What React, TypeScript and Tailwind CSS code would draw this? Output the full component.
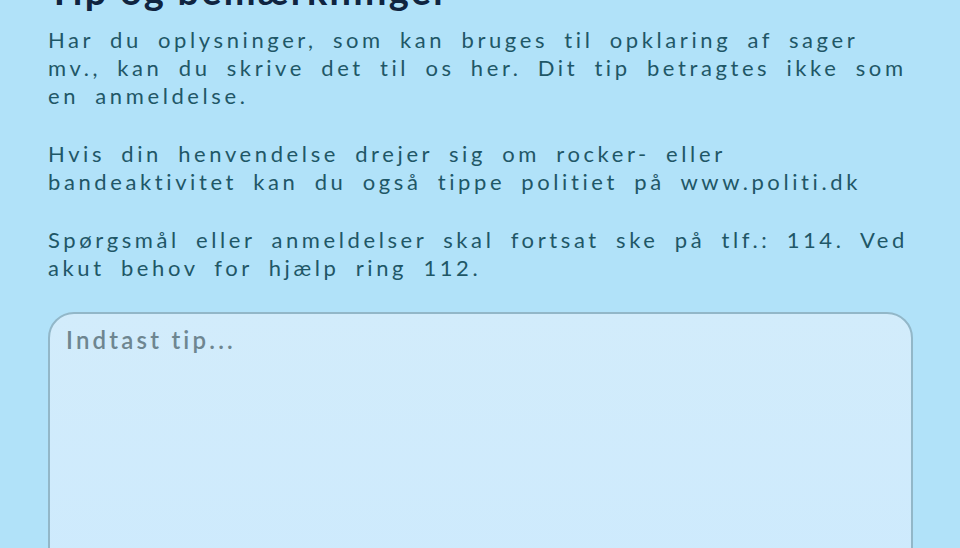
import React from 'react';

const BODY = "font-['Lato','Open_Sans',sans-serif] text-[22px] leading-[28px] tracking-[3.6px] [word-spacing:7px] text-[#1f5767]";

export default function App() {
  return (
    <div className="w-[960px] h-[548px] overflow-hidden bg-[#b1e2f9]">
      <div className="pl-[48px] pr-[40px]">
        <h1 className="-mt-[30px] font-['Lato',sans-serif] font-bold text-[38px] leading-[40px] tracking-[2.2px] text-[#0f2440]">
          Tip og bemærkninger
        </h1>
        <p className={`mt-[16px] ${BODY}`}>
          Har du oplysninger, som kan bruges til opklaring af sager
          <br />
          mv., kan du skrive det til os her. Dit tip betragtes ikke som
          <br />
          en anmeldelse.
        </p>
        <p className={`mt-[30px] ${BODY}`}>
          Hvis din henvendelse drejer sig om rocker- eller
          <br />
          bandeaktivitet kan du også tippe politiet på www.politi.dk
        </p>
        <p className={`mt-[30px] ${BODY}`}>
          Spørgsmål eller anmeldelser skal fortsat ske på tlf.: 114. Ved
          <br />
          akut behov for hjælp ring 112.
        </p>
        <div className="mt-[30px] mr-[7px] h-[300px] rounded-t-[26px] border-2 border-[#92b7c8] bg-gradient-to-b from-[#d2ecfb] to-[#cdeafd] px-[16px] pt-[8px]">
          <span className="font-['Lato',sans-serif] font-semibold text-[24px] tracking-[3.2px] text-[#6e8690]">
            Indtast tip...
          </span>
        </div>
      </div>
    </div>
  );
}
